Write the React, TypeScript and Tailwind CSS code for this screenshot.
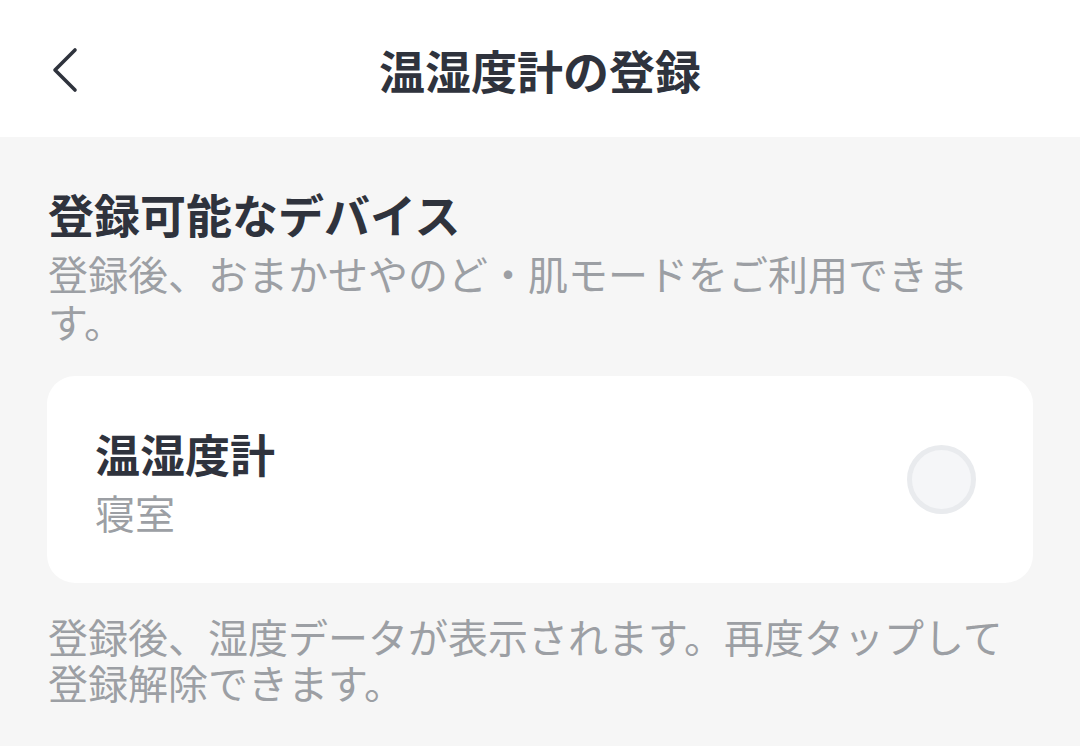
import React from 'react';

const font = { fontFamily: '"Noto Sans CJK JP", "Noto Sans", sans-serif' };

const BackIcon: React.FC = () => (
  <svg width="40" height="48" viewBox="0 0 40 48" fill="none">
    <path d="M29 4 L9 24 L29 44" stroke="#2f333d" strokeWidth="3.6" strokeLinecap="round" strokeLinejoin="round" />
  </svg>
);

const App: React.FC = () => {
  return (
    <div className="w-[1080px] h-[746px] bg-[#f6f6f6] overflow-hidden text-[#2f333d]" style={font}>
      {/* Header */}
      <header className="h-[137px] bg-white grid grid-cols-[1fr_auto_1fr] items-center">
        <div className="pl-[46px] pt-[2px]">
          <BackIcon />
        </div>
        <h1 className="text-[46px] leading-[60px] font-bold">温湿度計の登録</h1>
        <div />
      </header>

      {/* Content */}
      <main className="px-[47px] pt-[46px]">
        <h2 className="pl-[1px] text-[46px] leading-[60px] font-bold">登録可能なデバイス</h2>
        <p className="pl-[1px] mt-[6px] text-[40px] leading-[48px] text-[#9c9fa4]">
          登録後、おまかせやのど・肌モードをご利用できます。
        </p>

        <div className="mt-[31px] h-[207px] bg-white rounded-[28px] flex items-center justify-between pl-[48px] pr-[57px]">
          <div className="pt-[6px]">
            <div className="text-[45px] leading-[58px] font-bold">温湿度計</div>
            <div className="text-[40px] leading-[58px] text-[#9c9fa4]">寝室</div>
          </div>
          <div className="w-[69px] h-[69px] rounded-full border-[5px] border-[#e9ebee] bg-[#f5f6f8]" />
        </div>

        <p className="pl-[1px] mt-[30px] text-[40px] leading-[46px] text-[#9c9fa4]">
          登録後、湿度データが表示されます。再度タップして登録解除できます。
        </p>
      </main>
    </div>
  );
};

export default App;
